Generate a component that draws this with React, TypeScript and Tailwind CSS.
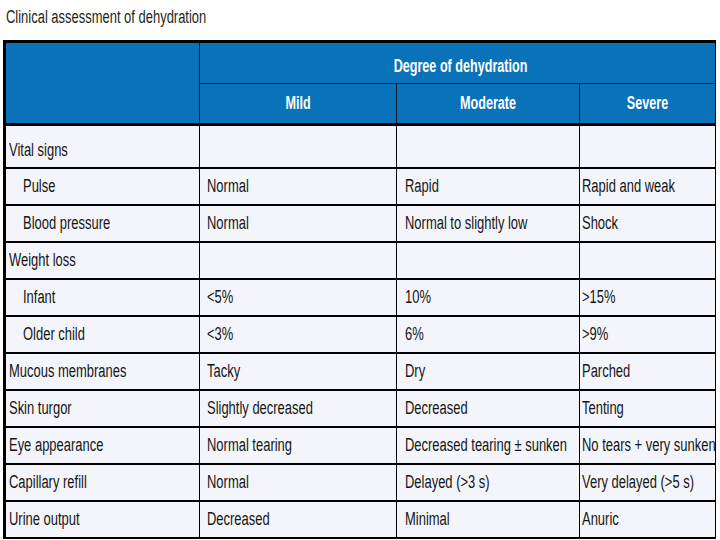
import React from "react";

type Row = {
  label: string;
  indent?: boolean;
  mild: string;
  moderate: string;
  severe: string;
};

const rows: Row[] = [
  { label: "Vital signs", mild: "", moderate: "", severe: "" },
  { label: "Pulse", indent: true, mild: "Normal", moderate: "Rapid", severe: "Rapid and weak" },
  { label: "Blood pressure", indent: true, mild: "Normal", moderate: "Normal to slightly low", severe: "Shock" },
  { label: "Weight loss", mild: "", moderate: "", severe: "" },
  { label: "Infant", indent: true, mild: "<5%", moderate: "10%", severe: ">15%" },
  { label: "Older child", indent: true, mild: "<3%", moderate: "6%", severe: ">9%" },
  { label: "Mucous membranes", mild: "Tacky", moderate: "Dry", severe: "Parched" },
  { label: "Skin turgor", mild: "Slightly decreased", moderate: "Decreased", severe: "Tenting" },
  { label: "Eye appearance", mild: "Normal tearing", moderate: "Decreased tearing ± sunken", severe: "No tears + very sunken" },
  { label: "Capillary refill", mild: "Normal", moderate: "Delayed (>3 s)", severe: "Very delayed (>5 s)" },
  { label: "Urine output", mild: "Decreased", moderate: "Minimal", severe: "Anuric" },
];

// the source uses a condensed face, so squeeze Liberation Sans sideways
function Narrow({ children, center }: { children: React.ReactNode; center?: boolean }) {
  return (
    <span
      className={
        "inline-block whitespace-nowrap " +
        (center ? "origin-center scale-x-[0.7]" : "origin-left scale-x-[0.72]")
      }
    >
      {children}
    </span>
  );
}

export default function App() {
  return (
    <div className="w-[720px] h-[540px] bg-white overflow-hidden font-['Liberation_Sans',Arial,sans-serif] text-[#151515]">
      <div className="h-[40px] pl-[6px] pt-[6px] text-[18px] leading-[22px] text-[#231f20]">
        <Narrow>Clinical assessment of dehydration</Narrow>
      </div>

      <div className="ml-[3px] w-[713px] border-t-[3px] border-l-[3px] border-r border-black">
        {/* header */}
        <div className="grid grid-cols-[193px_197px_183px_136px] grid-rows-[41px_39px] bg-[#0a72b8] text-white font-bold border-b-[3px] border-black text-[18px]">
          <div className="row-span-2" />
          <div className="col-span-3 border-l border-[#0b1a33] border-b flex items-center justify-center pt-[6px] pl-[6px]">
            <Narrow center>Degree of dehydration</Narrow>
          </div>
          <div className="border-l border-[#0b1a33] flex items-center justify-center">
            <Narrow center>Mild</Narrow>
          </div>
          <div className="border-l border-[#0b1a33] flex items-center justify-center">
            <Narrow center>Moderate</Narrow>
          </div>
          <div className="border-l border-[#0b1a33] flex items-center justify-center">
            <Narrow center>Severe</Narrow>
          </div>
        </div>

        {/* body */}
        {rows.map((r, i) => {
          const pad = i === 0 ? " pt-[8px]" : "";
          return (
            <div
              key={r.label}
              className={
                "grid grid-cols-[193px_197px_183px_136px] bg-[#f4f5fb] border-b-2 border-black text-[18px] " +
                (i === 0 ? "h-[43px]" : "h-[37px]")
              }
            >
              <div className={"flex items-center " + (r.indent ? "pl-[17px]" : "pl-[3px]") + pad}>
                <Narrow>{r.label}</Narrow>
              </div>
              <div className={"border-l border-black flex items-center pl-[7px]" + pad}>
                <Narrow>{r.mild}</Narrow>
              </div>
              <div className={"border-l border-black flex items-center pl-[8px]" + pad}>
                <Narrow>{r.moderate}</Narrow>
              </div>
              <div className={"border-l border-black flex items-center pl-[2px]" + pad}>
                <Narrow>{r.severe}</Narrow>
              </div>
            </div>
          );
        })}
      </div>
    </div>
  );
}
